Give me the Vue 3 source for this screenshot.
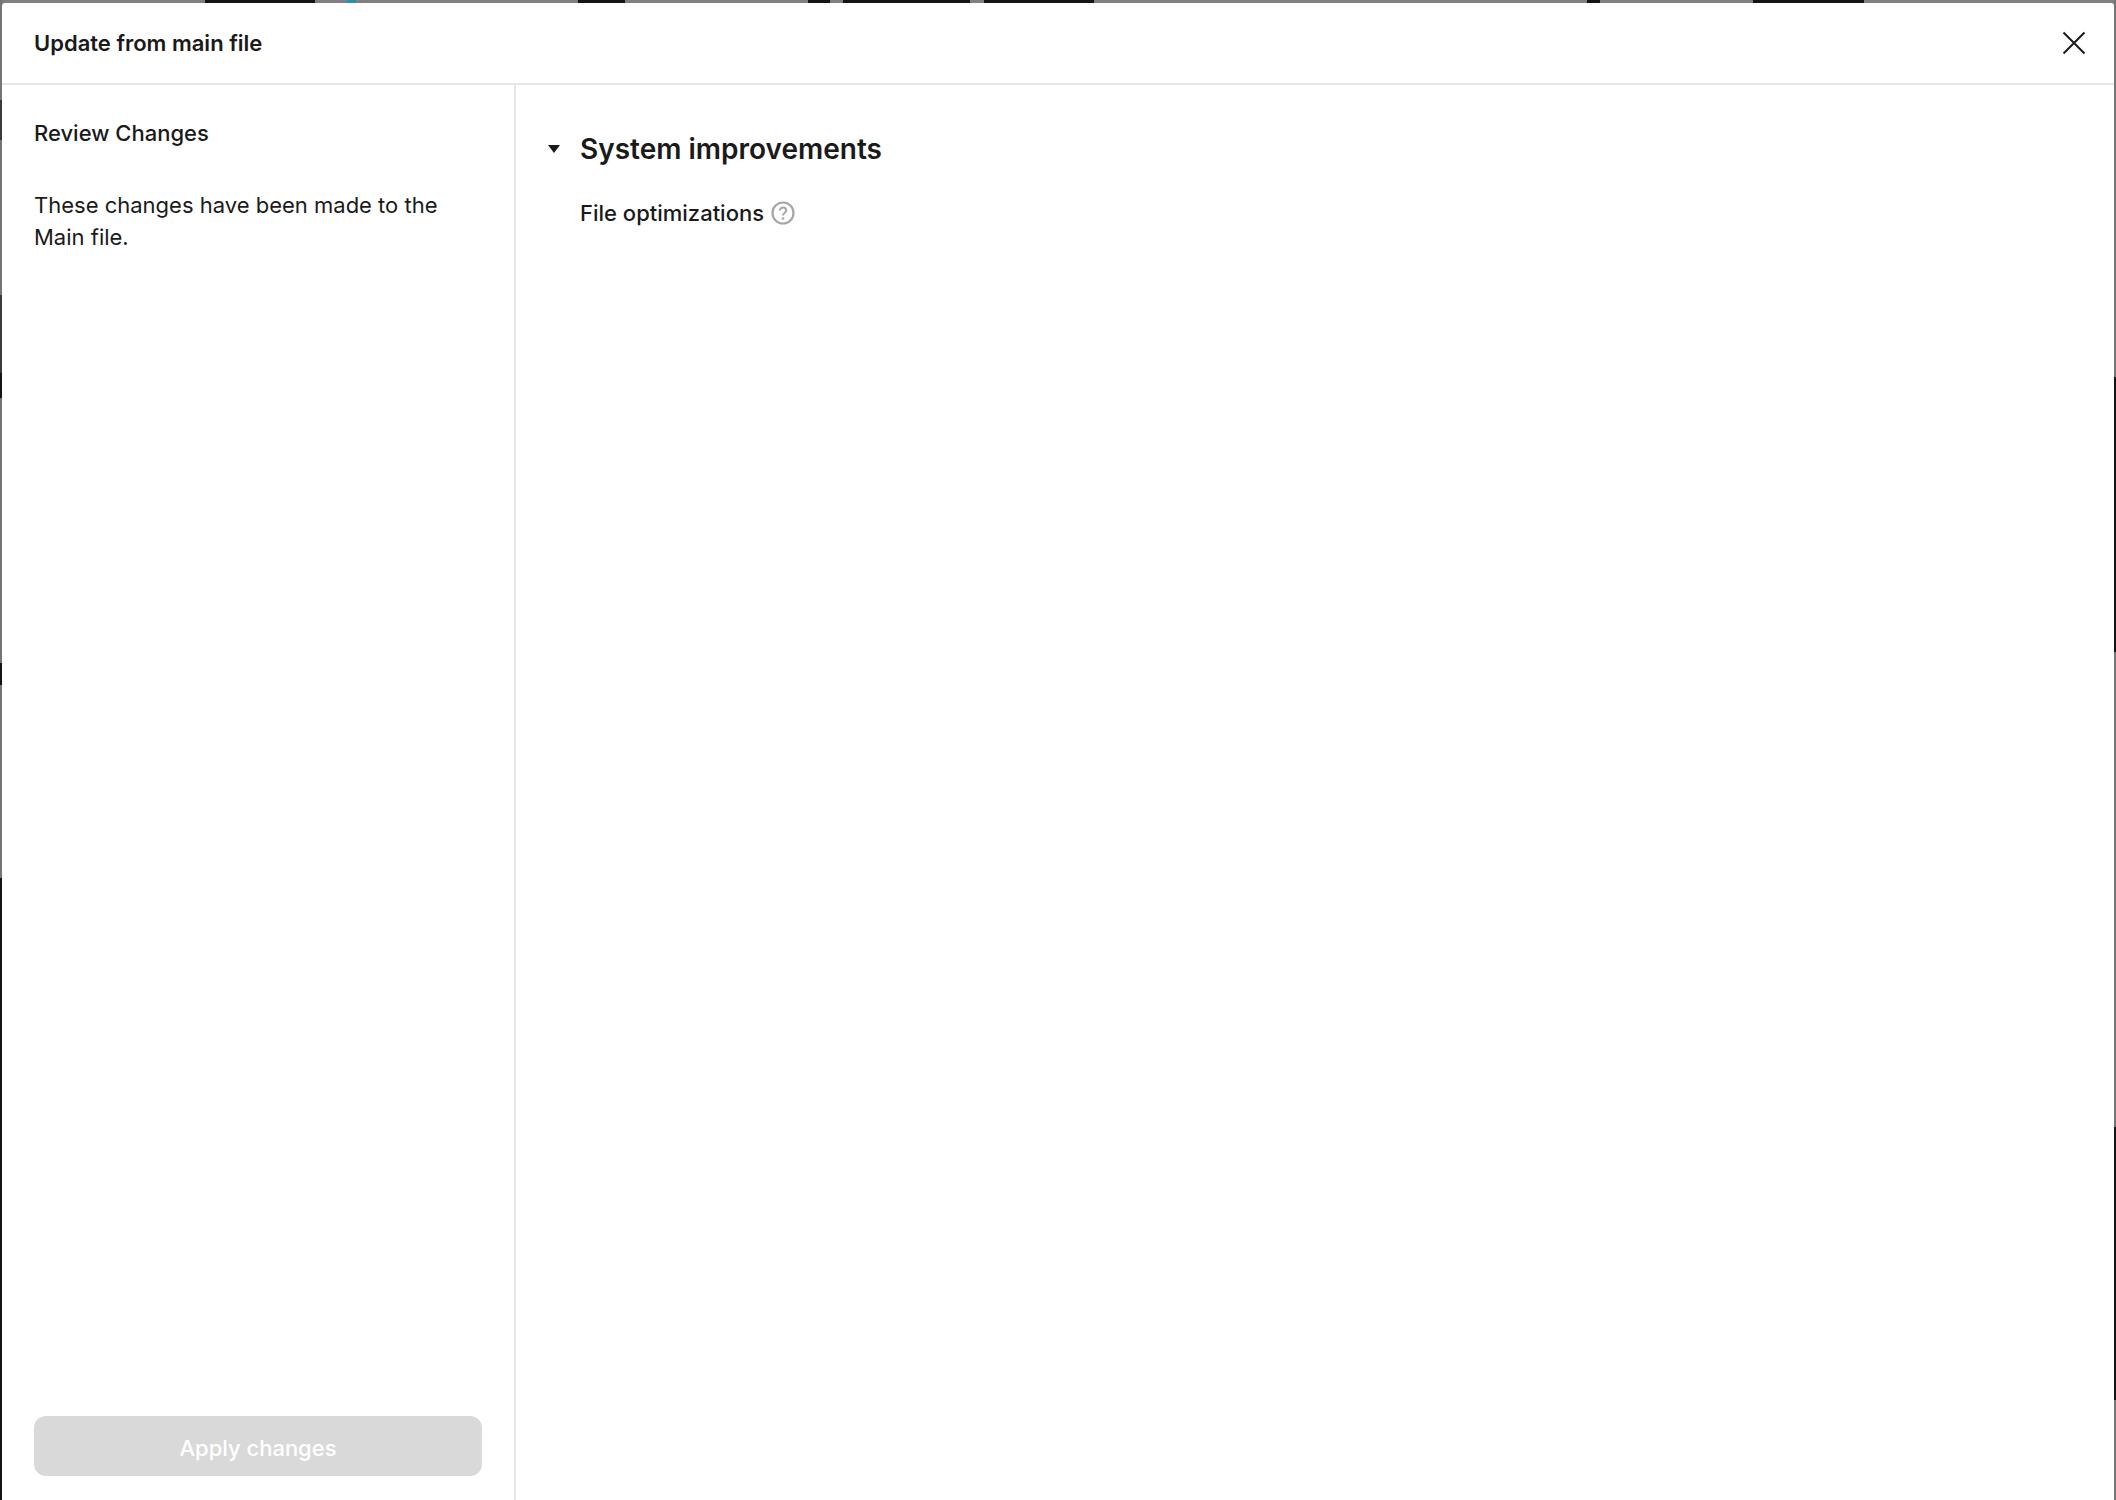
<template>
  <div class="backdrop">
    <div class="modal">
      <header class="modal-header">
        <span class="modal-title">Update from main file</span>
        <button class="close-btn" aria-label="Close">
          <svg width="24" height="24" viewBox="0 0 24 24" fill="none">
            <path d="M1.5 1.5 22.5 22.5M22.5 1.5 1.5 22.5" stroke="#1a1a1a" stroke-width="2" />
          </svg>
        </button>
      </header>

      <div class="modal-body">
        <aside class="sidebar">
          <div class="sidebar-top">
            <h2 class="review-title">Review Changes</h2>
            <p class="review-text">These changes have been made to the Main file.</p>
          </div>
          <button class="apply-btn" disabled>Apply changes</button>
        </aside>

        <main class="content">
          <div class="section-head">
            <svg class="caret" width="12" height="8" viewBox="0 0 12 8">
              <path d="M0 0H12L6 8Z" fill="#1a1a1a" />
            </svg>
            <h1 class="section-title">System improvements</h1>
          </div>
          <div class="section-row">
            <span>File optimizations</span>
            <svg class="help" width="24" height="24" viewBox="0 0 24 24" fill="none">
              <circle cx="12" cy="12" r="10.5" stroke="#a6a6a6" stroke-width="2.2" />
              <path d="M8.8 9.6C8.8 7.8 10.2 6.6 12 6.6S15.2 7.8 15.2 9.5C15.2 11.6 12 11.8 12 14.4" stroke="#a6a6a6" stroke-width="2" />
              <circle cx="12" cy="17.5" r="1.3" fill="#a6a6a6" />
            </svg>
          </div>
        </main>
      </div>
    </div>
  </div>
</template>

<script setup>
</script>

<style>
html,
body {
  margin: 0;
  background: #808080;
}
</style>

<style scoped>
/* the dimmed page behind the dialog only shows as thin strips round its edges */
.backdrop {
  width: 2116px;
  height: 1500px;
  padding: 3px 2px 0;
  box-sizing: border-box;
  overflow: hidden;
  background:
    linear-gradient(90deg,
      transparent 205px, #141414 205px, #141414 315px, transparent 315px,
      transparent 346px, #2f8fb0 346px, #2f8fb0 356px, transparent 356px,
      transparent 578px, #141414 578px, #141414 625px, transparent 625px,
      transparent 808px, #141414 808px, #141414 830px, transparent 830px,
      transparent 843px, #141414 843px, #141414 970px, transparent 970px,
      transparent 984px, #141414 984px, #141414 1094px, transparent 1094px,
      transparent 1587px, #141414 1587px, #141414 1600px, transparent 1600px,
      transparent 1753px, #141414 1753px, #141414 1864px, transparent 1864px) top / 100% 3px no-repeat,
    linear-gradient(180deg,
      #757575 100px, #3a3a3a 100px, #3a3a3a 140px, #757575 140px,
      #757575 295px, #3a3a3a 295px, #3a3a3a 373px, #141414 373px, #141414 398px, #757575 398px,
      #757575 663px, #141414 663px, #141414 685px, #757575 685px,
      #757575 878px, #141414 878px) left / 2px 100% no-repeat,
    linear-gradient(180deg,
      #757575 377px, #141414 377px, #141414 652px, #757575 652px,
      #757575 1127px, #141414 1127px, #141414 1400px, #757575 1400px) right / 2px 100% no-repeat,
    #808080;
  font-family: Inter, "Liberation Sans", sans-serif;
  color: #1a1a1a;
}

.modal {
  height: 100%;
  background: #fff;
  border-radius: 3px 3px 0 0;
  display: flex;
  flex-direction: column;
}

.modal-header {
  height: 80px;
  flex-shrink: 0;
  display: flex;
  align-items: center;
  justify-content: space-between;
  padding: 0 28px 0 32px;
  border-bottom: 2px solid #e6e6e6;
}

.modal-title {
  font-size: 22px;
  font-weight: 600;
}

.close-btn {
  width: 24px;
  height: 24px;
  padding: 0;
  border: 0;
  background: none;
  display: flex;
}

.modal-body {
  flex: 1;
  display: flex;
  min-height: 0;
}

.sidebar {
  width: 514px;
  flex-shrink: 0;
  box-sizing: border-box;
  border-right: 2px solid #e6e6e6;
  padding: 32px 32px 24px;
  display: flex;
  flex-direction: column;
  justify-content: space-between;
}

.review-title {
  margin: 0 0 40px;
  font-size: 22px;
  line-height: 32px;
  font-weight: 500;
}

.review-text {
  margin: 0;
  font-size: 22px;
  line-height: 32px;
}

.apply-btn {
  height: 60px;
  padding: 3px 0 0;
  border: 0;
  border-radius: 12px;
  background: #d9d9d9;
  color: #fff;
  font: 500 22px Inter, "Liberation Sans", sans-serif;
}

.content {
  flex: 1;
  padding: 44px 32px;
}

.section-head {
  display: flex;
  align-items: center;
  gap: 20px;
  height: 40px;
}

.section-title {
  margin: 0;
  font-size: 28px;
  font-weight: 600;
}

.section-row {
  margin: 28px 0 0 32px;
  display: flex;
  align-items: center;
  gap: 7px;
  font-size: 22px;
  font-weight: 500;
  height: 32px;
}
</style>
